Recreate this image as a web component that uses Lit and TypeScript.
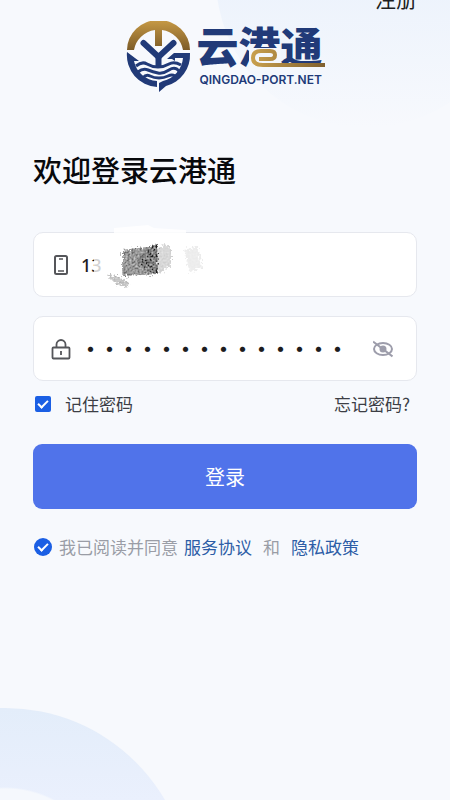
import { LitElement, html, svg, css } from "lit";
import { customElement, state } from "lit/decorators.js";

@customElement("port-logo")
export class PortLogo extends LitElement {
  static styles = css`
    :host {
      display: flex;
      justify-content: center;
      align-items: flex-start;
      gap: 5px;
      color: #213a78;
    }
    .emblem {
      width: 66px;
      height: 72px;
      flex: none;
    }
    .words {
      position: relative;
      width: 128px;
    }
    .name {
      font: 900 42px/48px "Noto Sans CJK SC", sans-serif;
    }
    .domain {
      font: 600 12px/16px Inter, sans-serif;
      padding: 3px 0 0 3px;
      white-space: nowrap;
    }
    .swoosh {
      position: absolute;
      left: 0;
      top: 0;
      width: 130px;
      height: 56px;
    }
  `;

  render() {
    return html`
      <svg class="emblem" viewBox="0 0 66 72" aria-hidden="true">
        <defs>
          <linearGradient id="g" x1="0" y1="0" x2="0" y2="1">
            <stop offset="0" stop-color="#c79a45" />
            <stop offset="1" stop-color="#7d5c28" />
          </linearGradient>
        </defs>
        <path
          fill="url(#g)"
          d="M1 29A31.500 30 0 0 1 64 29H57A25 24 0 0 0 36 9V25H29V9A25 24 0 0 0 8 29Z"
        />
        <g fill="none" stroke="#213a78" stroke-width="6">
          <path d="M17.500 22L32.500 36L47.500 22" stroke-linecap="round" />
          <path d="M32.500 35V46" />
          <g stroke-width="3">
            <path d="M10 45Q16 40 21 43T32 46T43 43T55 44" />
            <path d="M12 51Q17 47 22 49T32 52T43 49T53 50" />
            <path d="M17 57Q20 53 24 55T33 57T42 55T49 55" />
          </g>
        </g>
        <g fill="#213a78">
          <path d="M1 31L13 40H8A25 25 0 0 0 31 60V66A32 32 0 0 1 1 31Z" />
          <path
            d="M41 38L48 32H64A32 32 0 0 1 40 65L33 71V62L37 60A26 26 0 0 0 57 37H49V40L46 38Z"
          />
        </g>
      </svg>
      <div class="words">
        <div class="name">云港通</div>
        <div class="domain">QINGDAO-PORT.NET</div>
        <svg class="swoosh" viewBox="0 0 130 56" aria-hidden="true">
          <defs>
            <linearGradient id="s" gradientUnits="userSpaceOnUse" x1="54" y1="0" x2="128" y2="0">
              <stop offset="0" stop-color="#c9a04d" />
              <stop offset="1" stop-color="#80602e" />
            </linearGradient>
          </defs>
          <path fill="#f4f7fc" d="M52 27H84V50H52ZM84 42H130V50H84Z" />
          <path
            fill="none"
            stroke="url(#s)"
            stroke-width="4"
            d="M62 38H73Q78 38 78 34Q78 30 73 30H64Q56 30 56 37Q56 44 66 44H128"
          />
        </svg>
      </div>
    `;
  }
}

@customElement("app-root")
export class AppRoot extends LitElement {
  @state() private shown = false;

  static styles = css`
    :host {
      display: block;
      font-family: "Noto Sans CJK SC", sans-serif;
      color: #3c3e45;
    }
    * {
      box-sizing: border-box;
    }
    .page {
      position: relative;
      min-height: 100vh;
      overflow: hidden;
      background: #f7f9fd;
      padding: 0 33px;
    }
    .glow {
      position: absolute;
      top: -172px;
      right: -66px;
      width: 300px;
      height: 300px;
      border-radius: 50%;
      background: linear-gradient(to bottom, #edf3fc 55%, #f7f9fd);
    }
    .ring {
      position: absolute;
      left: -180px;
      bottom: -278px;
      width: 370px;
      height: 370px;
      border-radius: 50%;
      border: 80px solid transparent;
      background:
        radial-gradient(circle, #f5f8fd 104px, transparent 106px) border-box,
        linear-gradient(#e3edfa, #eaf0fd 25%) border-box;
    }
    .content {
      position: relative;
    }
    .top {
      display: flex;
      justify-content: flex-end;
      align-items: flex-end;
      height: 11px;
      overflow: hidden;
    }
    a {
      text-decoration: none;
      color: inherit;
    }
    .register {
      font-size: 21px;
      line-height: 26px;
      color: #1c1e22;
    }
    port-logo {
      margin-top: 10px;
    }
    h1 {
      margin: 55px 0 42px;
      font-size: 29px;
      line-height: 42px;
      font-weight: 500;
      color: #08090c;
    }
    .field {
      position: relative;
      display: flex;
      align-items: center;
      height: 65px;
      margin-bottom: 19px;
      padding: 0 23px 0 17px;
      background: #fff;
      border: 1px solid #e6e8ee;
      border-radius: 10px;
    }
    .icon {
      width: 20px;
      height: 24px;
      flex: none;
    }
    .input {
      flex: 1;
      min-width: 0;
      height: 40px;
      margin: 0 4px 0 10px;
      padding: 0;
      border: 0;
      outline: 0;
      background: none;
      font: 900 19px/24px "Noto Sans CJK SC", sans-serif;
      color: #1c1c1e;
    }
    .phone {
      font: 500 18px/24px "Noto Sans", sans-serif;
    }
    .smudge {
      position: absolute;
      left: 58px;
      top: -9px;
      width: 120px;
      height: 68px;
      pointer-events: none;
    }
    .eye {
      display: flex;
      padding: 0;
      border: 0;
      background: none;
    }
    .options {
      display: flex;
      justify-content: space-between;
      align-items: center;
      margin-top: -9px;
      padding-right: 7px;
      font-size: 17px;
      line-height: 26px;
    }
    label {
      display: flex;
      align-items: center;
    }
    .remember {
      gap: 13px;
    }
    .check {
      appearance: none;
      display: grid;
      place-items: center;
      width: 16px;
      height: 16px;
      margin: 0 1px 0 2px;
      border-radius: 2px;
      background: #1b5fe4;
    }
    .check:checked::after {
      content: "";
      width: 8px;
      height: 4px;
      margin-bottom: 3px;
      border: solid #fff;
      border-width: 0 0 2px 2px;
      transform: rotate(-45deg);
    }
    .round {
      width: 18px;
      height: 18px;
      margin: 0 0 0 1px;
      border-radius: 50%;
    }
    .login {
      display: block;
      width: 100%;
      height: 65px;
      margin: 27px 0 25px;
      border: 0;
      border-radius: 9px;
      background: #5073ea;
      color: #fff;
      font: 400 20px/30px "Noto Sans CJK SC", sans-serif;
    }
    .agree {
      display: flex;
      align-items: center;
      flex-wrap: wrap;
      gap: 6px;
      font-size: 17px;
      line-height: 26px;
      color: #9a9da6;
    }
    .agree label {
      gap: 7px;
    }
    .agree a {
      color: #2d5da6;
    }
    .and {
      margin: 0 5px;
    }
  `;

  private smudge() {
    return svg`
      <defs>
        <filter id="grain" x="-10%" y="-10%" width="120%" height="120%">
          <feTurbulence type="fractalNoise" baseFrequency="0.5" numOctaves="2" seed="4" result="n" />
          <feDisplacementMap in="SourceGraphic" in2="n" scale="9" xChannelSelector="R" yChannelSelector="G" result="d" />
          <feColorMatrix in="n" values="0 0 0 0 1  0 0 0 0 1  0 0 0 0 1  1 0 0 0 -0.3" />
          <feComposite in2="d" operator="in" result="w" />
          <feMerge><feMergeNode in="d" /><feMergeNode in="w" /></feMerge>
        </filter>
      </defs>
      <path fill="#fff" fill-opacity="0.8" d="M2 28L22 22V4L56 1L62 4L94 6V30L112 34V54L60 60L30 58L2 48Z" />
      <g filter="url(#grain)">
        <path fill="#bbb" d="M64 25L75 20L79 24V42L66 50Z" opacity="0.7" />
        <path fill="#ccc" d="M92 26L106 22L110 44L98 48Z" opacity="0.4" />
        <path fill="#a0a0a0" d="M14 50L28 53L37 59L35 64L24 60Z" opacity="0.8" />
        <path fill="#6a6a6a" d="M30 26L64 22L65 50L30 52Z" />
        <path fill="#1c1c1c" d="M45 37L55 25L65 19L66 50L56 48Z" />
      </g>
    `;
  }

  render() {
    return html`
      <main class="page">
        <div class="glow"></div>
        <div class="ring"></div>
        <div class="content">
          <nav class="top"><a class="register" href="#register">注册</a></nav>
          <port-logo></port-logo>
          <h1>欢迎登录云港通</h1>
          <form @submit=${(e: Event) => e.preventDefault()}>
            <div class="field">
              <svg class="icon" viewBox="0 0 20 24" fill="none" stroke="#55565a" aria-hidden="true">
                <rect x="4" y="3" width="12" height="18" rx="1.500" stroke-width="2" />
                <path d="M8 6H12M7 18H13" stroke-width="1.500" />
              </svg>
              <input class="input phone" type="tel" aria-label="手机号" value="13" />
              <svg class="smudge" viewBox="0 0 120 68" aria-hidden="true">${this.smudge()}</svg>
            </div>
            <div class="field">
              <svg class="icon" viewBox="0 0 20 24" fill="none" stroke="#55565a" stroke-width="1.800" aria-hidden="true">
                <rect x="1.500" y="10.500" width="17" height="11" rx="1" />
                <path d="M5.500 10V7.500A4.500 4.500 0 0 1 14.500 7.500V10M10 14V18" />
              </svg>
              <input
                class="input"
                type=${this.shown ? "text" : "password"}
                aria-label="密码"
                value="qingdaoport123"
              />
              <button
                class="eye"
                type="button"
                aria-label="显示密码"
                @click=${() => (this.shown = !this.shown)}
              >
                <svg class="icon" viewBox="0 0 20 24" fill="none" stroke="#9d9dab" stroke-width="2" aria-hidden="true">
                  <ellipse cx="10" cy="12" rx="9" ry="6" />
                  <circle cx="10" cy="12" r="2.500" fill="#9d9dab" />
                  <path d="M0 4.500L19.500 19.500" />
                </svg>
              </button>
            </div>
            <div class="options">
              <label class="remember"><input class="check" type="checkbox" checked />记住密码</label>
              <a href="#forgot">忘记密码?</a>
            </div>
            <button class="login" type="submit">登录</button>
            <div class="agree">
              <label><input class="check round" type="checkbox" checked />我已阅读并同意</label>
              <a href="#terms">服务协议</a>
              <span class="and">和</span>
              <a href="#privacy">隐私政策</a>
            </div>
          </form>
        </div>
      </main>
    `;
  }
}
